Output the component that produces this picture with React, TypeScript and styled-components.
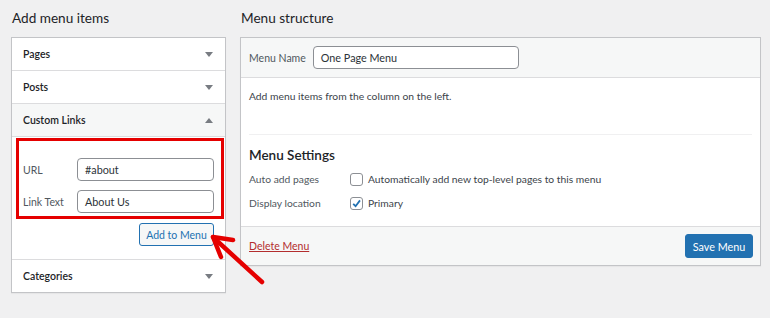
import styled, { createGlobalStyle } from "styled-components";

const GlobalStyle = createGlobalStyle`
  html, body {
    margin: 0;
    padding: 0;
    background: #f0f0f1;
  }
  body {
    font-family: Lato, "Open Sans", sans-serif;
    font-size: 10.5px;
    color: #3c434a;
  }
`;

const Page = styled.div`
  position: relative;
  display: flex;
  gap: 14px;
  padding: 0 9px 0 11px;
  width: 770px;
  height: 318px;
  box-sizing: border-box;
`;

const Column = styled.div<{ $width: number }>`
  width: ${(p) => p.$width}px;
  display: flex;
  flex-direction: column;
`;

const Title = styled.h2`
  margin: 0;
  height: 37px;
  line-height: 36px;
  font-size: 13.6px;
  font-weight: 400;
  color: #1d2327;
  padding-left: 1px;
`;

const Panel = styled.div`
  background: #fff;
  border: 1px solid #c3c4c7;
  box-shadow: 0 1px 1px rgba(0, 0, 0, 0.04);
`;

const AccordionRow = styled.div<{ $open?: boolean }>`
  height: 32px;
  display: flex;
  align-items: center;
  justify-content: space-between;
  padding: 0 12px 0 11px;
  font-weight: 600;
  color: #1d2327;
  background: ${(p) => (p.$open ? "#f6f7f7" : "#fff")};
  border-top: 1px solid #dcdcde;
  &:first-child {
    border-top: none;
  }
`;

const Caret = styled.span<{ $up?: boolean }>`
  width: 0;
  height: 0;
  border-left: 4px solid transparent;
  border-right: 4px solid transparent;
  ${(p) =>
    p.$up
      ? "border-bottom: 5px solid #787c82;"
      : "border-top: 5px solid #787c82;"}
`;

const LinksBody = styled.div`
  border-top: 1px solid #dcdcde;
  padding: 1px 1px 13px 4px;
  display: flex;
  flex-direction: column;
  align-items: flex-end;
`;

const Highlight = styled.div`
  align-self: stretch;
  border: 3px solid #e50000;
  padding: 17px 7px 3px 4px;
  display: flex;
  flex-direction: column;
  gap: 9px;
`;

const FieldRow = styled.label`
  display: flex;
  align-items: center;
  justify-content: space-between;
  color: #50575e;
`;

const Input = styled.div<{ $width: number }>`
  width: ${(p) => p.$width}px;
  height: 23px;
  box-sizing: border-box;
  border: 1px solid #8c8f94;
  border-radius: 4px;
  background: #fff;
  display: flex;
  align-items: center;
  padding: 0 7px;
  font-size: 10.8px;
  color: #2c3338;
`;

const SecondaryButton = styled.button`
  margin-top: 4px;
  margin-right: 10px;
  height: 23px;
  width: 75px;
  padding: 0;
  border: 1px solid #2271b1;
  border-radius: 3px;
  background: #f6f7f7;
  color: #2271b1;
  font-family: inherit;
  font-size: 10.5px;
`;

const HeaderBar = styled.div`
  height: 39px;
  background: #f6f7f7;
  border-bottom: 1px solid #dcdcde;
  display: flex;
  align-items: center;
  gap: 7px;
  padding-left: 8px;
`;

const Label = styled.span`
  color: #50575e;
`;

const Body = styled.div`
  padding: 0 8px;
  height: 148px;
  font-size: 10.3px;
`;

const Hint = styled.p`
  margin: 0;
  padding-top: 12px;
  height: 44px;
  border-bottom: 1px solid #f0f0f1;
  color: #3c434a;
`;

const SettingsTitle = styled.h3`
  margin: 12px 0 4px;
  font-size: 13.5px;
  font-weight: 600;
  color: #1d2327;
`;

const SettingRow = styled.div`
  display: flex;
  align-items: center;
  height: 24px;
`;

const SettingLabel = styled.span`
  width: 101px;
  color: #50575e;
`;

const Check = styled.span`
  width: 13px;
  height: 13px;
  box-sizing: border-box;
  border: 1px solid #8c8f94;
  border-radius: 3px;
  background: #fff;
  margin-right: 5px;
  display: flex;
  align-items: center;
  justify-content: center;
`;

const Footer = styled.div`
  height: 38px;
  background: #f6f7f7;
  border-top: 1px solid #dcdcde;
  display: flex;
  align-items: center;
  justify-content: space-between;
  padding: 0 7px 0 8px;
`;

const DeleteLink = styled.a`
  color: #b32d2e;
  text-decoration: underline;
`;

const PrimaryButton = styled.button`
  height: 24px;
  width: 68px;
  padding: 0;
  border: 1px solid #2271b1;
  border-radius: 3px;
  background: #2271b1;
  color: #fff;
  font-family: inherit;
  font-size: 10.8px;
`;

const Arrow = styled.svg`
  position: absolute;
  left: 205px;
  top: 228px;
  pointer-events: none;
`;

export default function App() {
  return (
    <>
      <GlobalStyle />
      <Page>
        <Column $width={215}>
          <Title>Add menu items</Title>
          <Panel>
            <AccordionRow>
              Pages <Caret />
            </AccordionRow>
            <AccordionRow>
              Posts <Caret />
            </AccordionRow>
            <AccordionRow $open>
              Custom Links <Caret $up />
            </AccordionRow>
            <LinksBody>
              <Highlight>
                <FieldRow>
                  URL <Input $width={137}>#about</Input>
                </FieldRow>
                <FieldRow>
                  Link Text <Input $width={137}>About Us</Input>
                </FieldRow>
              </Highlight>
              <SecondaryButton>Add to Menu</SecondaryButton>
            </LinksBody>
            <AccordionRow>
              Categories <Caret />
            </AccordionRow>
          </Panel>
        </Column>
        <Column $width={521}>
          <Title>Menu structure</Title>
          <Panel>
            <HeaderBar>
              <Label>Menu Name</Label>
              <Input $width={206}>One Page Menu</Input>
            </HeaderBar>
            <Body>
              <Hint>Add menu items from the column on the left.</Hint>
              <SettingsTitle>Menu Settings</SettingsTitle>
              <SettingRow>
                <SettingLabel>Auto add pages</SettingLabel>
                <Check />
                Automatically add new top-level pages to this menu
              </SettingRow>
              <SettingRow>
                <SettingLabel>Display location</SettingLabel>
                <Check>
                  <svg width="11" height="11" viewBox="0 0 11 11">
                    <path
                      d="M2.2 5.8 L4.6 8.2 L9 2.4"
                      fill="none"
                      stroke="#2271b1"
                      strokeWidth="1.8"
                    />
                  </svg>
                </Check>
                Primary
              </SettingRow>
            </Body>
            <Footer>
              <DeleteLink>Delete Menu</DeleteLink>
              <PrimaryButton>Save Menu</PrimaryButton>
            </Footer>
          </Panel>
        </Column>
        <Arrow width="64" height="62" viewBox="0 0 64 62">
          <g stroke="#e50000" strokeWidth="4.5" strokeLinecap="round" fill="none">
            <path d="M57 54 L10 11" />
            <path d="M8 9 L28 12" />
            <path d="M8 9 L16 29" />
          </g>
        </Arrow>
      </Page>
    </>
  );
}
